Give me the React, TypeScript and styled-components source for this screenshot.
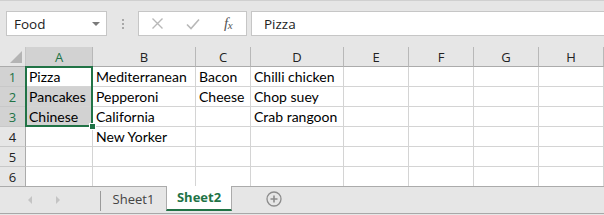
import { Fragment } from "react";
import styled, { createGlobalStyle } from "styled-components";

const GlobalStyle = createGlobalStyle`
	html, body {
		margin: 0;
		padding: 0;
		background: #e6e6e6;
		overflow: hidden;
	}
	* {
		box-sizing: border-box;
	}
`;

const green = "#217346";
const uiFont = `"Open Sans", "Noto Sans", sans-serif`;
const cellFont = `Lato, "Liberation Sans", sans-serif`;

const columns = [
	{ key: "A", width: 67 },
	{ key: "B", width: 103 },
	{ key: "C", width: 55 },
	{ key: "D", width: 93 },
	{ key: "E", width: 65 },
	{ key: "F", width: 65 },
	{ key: "G", width: 65 },
	{ key: "H", width: 65 },
];

const rows: string[][] = [
	["Pizza", "Mediterranean", "Bacon", "Chilli chicken", "", "", "", ""],
	["Pancakes", "Pepperoni", "Cheese", "Chop suey", "", "", "", ""],
	["Chinese", "California", "", "Crab rangoon", "", "", "", ""],
	["", "New Yorker", "", "", "", "", "", ""],
	["", "", "", "", "", "", "", ""],
	["", "", "", "", "", "", "", ""],
];

const Window = styled.div`
	width: 604px;
	height: 215px;
	display: flex;
	flex-direction: column;
	background: #e6e6e6;
	border-top: 1px solid #d0d0d0;
`;

const FormulaBar = styled.div`
	height: 46px;
	display: flex;
	align-items: flex-start;
	padding: 10px 0 0 6px;
	font-family: ${uiFont};
`;

const NameBox = styled.div`
	width: 101px;
	height: 25px;
	background: #ffffff;
	border: 1px solid #c6c6c6;
	display: flex;
	align-items: center;
	justify-content: space-between;
	padding: 0 6px 0 7px;
	font-size: 13.5px;
	color: #222;
`;

const DropArrow = styled.span`
	width: 0;
	height: 0;
	border-left: 4px solid transparent;
	border-right: 4px solid transparent;
	border-top: 4px solid #7a7a7a;
`;

const Grip = styled.div`
	width: 31px;
	height: 25px;
	display: flex;
	flex-direction: column;
	align-items: center;
	justify-content: center;
	gap: 2px;

	span {
		width: 2px;
		height: 2px;
		background: #a8a8a8;
	}
`;

const FxBox = styled.div`
	width: 109px;
	height: 25px;
	background: #ffffff;
	border: 1px solid #c6c6c6;
	display: flex;
	align-items: center;
	padding-left: 12px;
	gap: 22px;
`;

const FxLabel = styled.span`
	font-family: "Liberation Serif", serif;
	font-style: italic;
	font-size: 15px;
	color: #555;
	letter-spacing: -0.5px;
	margin-left: 2px;

	sub {
		font-size: 11px;
		vertical-align: -1px;
	}
`;

const FormulaInput = styled.div`
	flex: 1;
	height: 25px;
	margin-left: 4px;
	background: #ffffff;
	border: 1px solid #c6c6c6;
	border-right: none;
	display: flex;
	align-items: center;
	padding-left: 12px;
	font-size: 13.5px;
	color: #222;
`;

const Sheet = styled.div`
	position: relative;
	height: 139px;
	overflow: hidden;
	display: grid;
	grid-template-columns: 26px ${columns.map((c) => `${c.width}px`).join(" ")};
	grid-auto-rows: 20px;
	background: #ffffff;
`;

const Corner = styled.div`
	background: #e6e6e6;
	border-bottom: 1px solid #ababab;
	border-right: 1px solid #c6c6c6;
	position: relative;

	&::after {
		content: "";
		position: absolute;
		right: 3px;
		bottom: 3px;
		border-left: 12px solid transparent;
		border-bottom: 12px solid #b4b4b4;
	}
`;

const ColHeader = styled.div<{ $selected?: boolean }>`
	background: ${({ $selected }) => ($selected ? "#d2d2d2" : "#e6e6e6")};
	color: ${({ $selected }) => ($selected ? green : "#222")};
	border-right: 1px solid #b8b8b8;
	border-bottom: 1px solid ${({ $selected }) => ($selected ? green : "#ababab")};
	display: flex;
	align-items: center;
	justify-content: center;
	font-family: ${uiFont};
	font-size: 13px;
	padding-top: 1px;
`;

const RowHeader = styled.div<{ $selected?: boolean }>`
	background: ${({ $selected }) => ($selected ? "#d2d2d2" : "#e6e6e6")};
	color: ${({ $selected }) => ($selected ? green : "#222")};
	border-right: 1px solid #ababab;
	border-bottom: 1px solid #c8c8c8;
	display: flex;
	align-items: center;
	justify-content: center;
	font-family: ${uiFont};
	font-size: 13px;
`;

const Cell = styled.div<{ $highlight?: boolean }>`
	background: ${({ $highlight }) => ($highlight ? "#d2d2d2" : "#ffffff")};
	border-right: 1px solid #d4d4d4;
	border-bottom: 1px solid #d4d4d4;
	font-family: ${cellFont};
	font-size: 14px;
	color: #000;
	padding: 1px 0 0 3px;
	white-space: nowrap;
	overflow: visible;
	line-height: 18px;
`;

const Selection = styled.div`
	position: absolute;
	left: 25px;
	top: 19px;
	width: 68px;
	height: 61px;
	border: 2px solid ${green};
	pointer-events: none;
`;

const FillHandle = styled.div`
	position: absolute;
	right: -5px;
	bottom: -5px;
	width: 7px;
	height: 7px;
	background: ${green};
	border: 1px solid #ffffff;
`;

const TabBar = styled.div`
	flex: 1;
	display: flex;
	align-items: stretch;
	border-top: 1px solid #ababab;
	border-bottom: 1px solid #a8a8a8;
	background: #e6e6e6;
	font-family: ${uiFont};
	font-size: 13px;
	margin-bottom: 1px;
`;

const TabNav = styled.div`
	width: 101px;
	display: flex;
	align-items: center;
	padding-left: 28px;
	gap: 24px;
	position: relative;

	&::after {
		content: "";
		position: absolute;
		right: 0;
		top: 4px;
		height: 20px;
		border-right: 1px solid #9a9a9a;
	}
`;

const NavArrow = styled.span<{ $dir: "left" | "right" }>`
	width: 0;
	height: 0;
	border-top: 4px solid transparent;
	border-bottom: 4px solid transparent;
	${({ $dir }) =>
		$dir === "left"
			? "border-right: 4px solid #c4c4c4;"
			: "border-left: 4px solid #c4c4c4;"}
`;

const Tab = styled.div<{ $active?: boolean }>`
	width: ${({ $active }) => ($active ? "66px" : "65px")};
	height: ${({ $active }) => ($active ? "25px" : "24px")};
	margin-top: ${({ $active }) => ($active ? "-1px" : "0")};
	display: flex;
	align-items: center;
	justify-content: center;
	padding-bottom: 1px;
	color: ${({ $active }) => ($active ? green : "#444")};
	font-weight: ${({ $active }) => ($active ? 700 : 400)};
	background: ${({ $active }) => ($active ? "#ffffff" : "transparent")};
	border-left: ${({ $active }) => ($active ? "1px solid #ababab" : "none")};
	border-right: ${({ $active }) => ($active ? "1px solid #ababab" : "none")};
	border-bottom: ${({ $active }) => ($active ? `2px solid ${green}` : "none")};
`;

const AddSheet = styled.div`
	margin-left: 34px;
	display: flex;
	align-items: center;
	padding-bottom: 2px;
`;

function PlusCircle() {
	return (
		<svg width="16" height="16" viewBox="0 0 16 16">
			<circle cx="8" cy="8" r="7" fill="none" stroke="#8c8c8c" strokeWidth="1.3" />
			<path d="M8 4.5v7M4.5 8h7" stroke="#8c8c8c" strokeWidth="1.6" />
		</svg>
	);
}

function CancelIcon() {
	return (
		<svg width="13" height="13" viewBox="0 0 13 13">
			<path d="M1.5 1.5l10 10M11.5 1.5l-10 10" stroke="#b8b8b8" strokeWidth="1.4" />
		</svg>
	);
}

function CheckIcon() {
	return (
		<svg width="14" height="12" viewBox="0 0 14 12">
			<path d="M1 6.5l4 4L13 1.5" fill="none" stroke="#b8b8b8" strokeWidth="1.6" />
		</svg>
	);
}

export default function App() {
	return (
		<>
			<GlobalStyle />
			<Window>
				<FormulaBar>
					<NameBox>
						Food
						<DropArrow />
					</NameBox>
					<Grip>
						<span />
						<span />
						<span />
					</Grip>
					<FxBox>
						<CancelIcon />
						<CheckIcon />
						<FxLabel>
							f<sub>x</sub>
						</FxLabel>
					</FxBox>
					<FormulaInput>Pizza</FormulaInput>
				</FormulaBar>

				<Sheet>
					<Corner />
					{columns.map((c) => (
						<ColHeader key={c.key} $selected={c.key === "A"}>
							{c.key}
						</ColHeader>
					))}
					{rows.map((row, r) => (
						<Fragment key={r}>
							<RowHeader $selected={r < 3}>{r + 1}</RowHeader>
							{row.map((value, c) => (
								<Cell key={c} $highlight={c === 0 && (r === 1 || r === 2)}>
									{value}
								</Cell>
							))}
						</Fragment>
					))}
					<Selection>
						<FillHandle />
					</Selection>
				</Sheet>

				<TabBar>
					<TabNav>
						<NavArrow $dir="left" />
						<NavArrow $dir="right" />
					</TabNav>
					<Tab>Sheet1</Tab>
					<Tab $active>Sheet2</Tab>
					<AddSheet>
						<PlusCircle />
					</AddSheet>
				</TabBar>
			</Window>
		</>
	);
}
